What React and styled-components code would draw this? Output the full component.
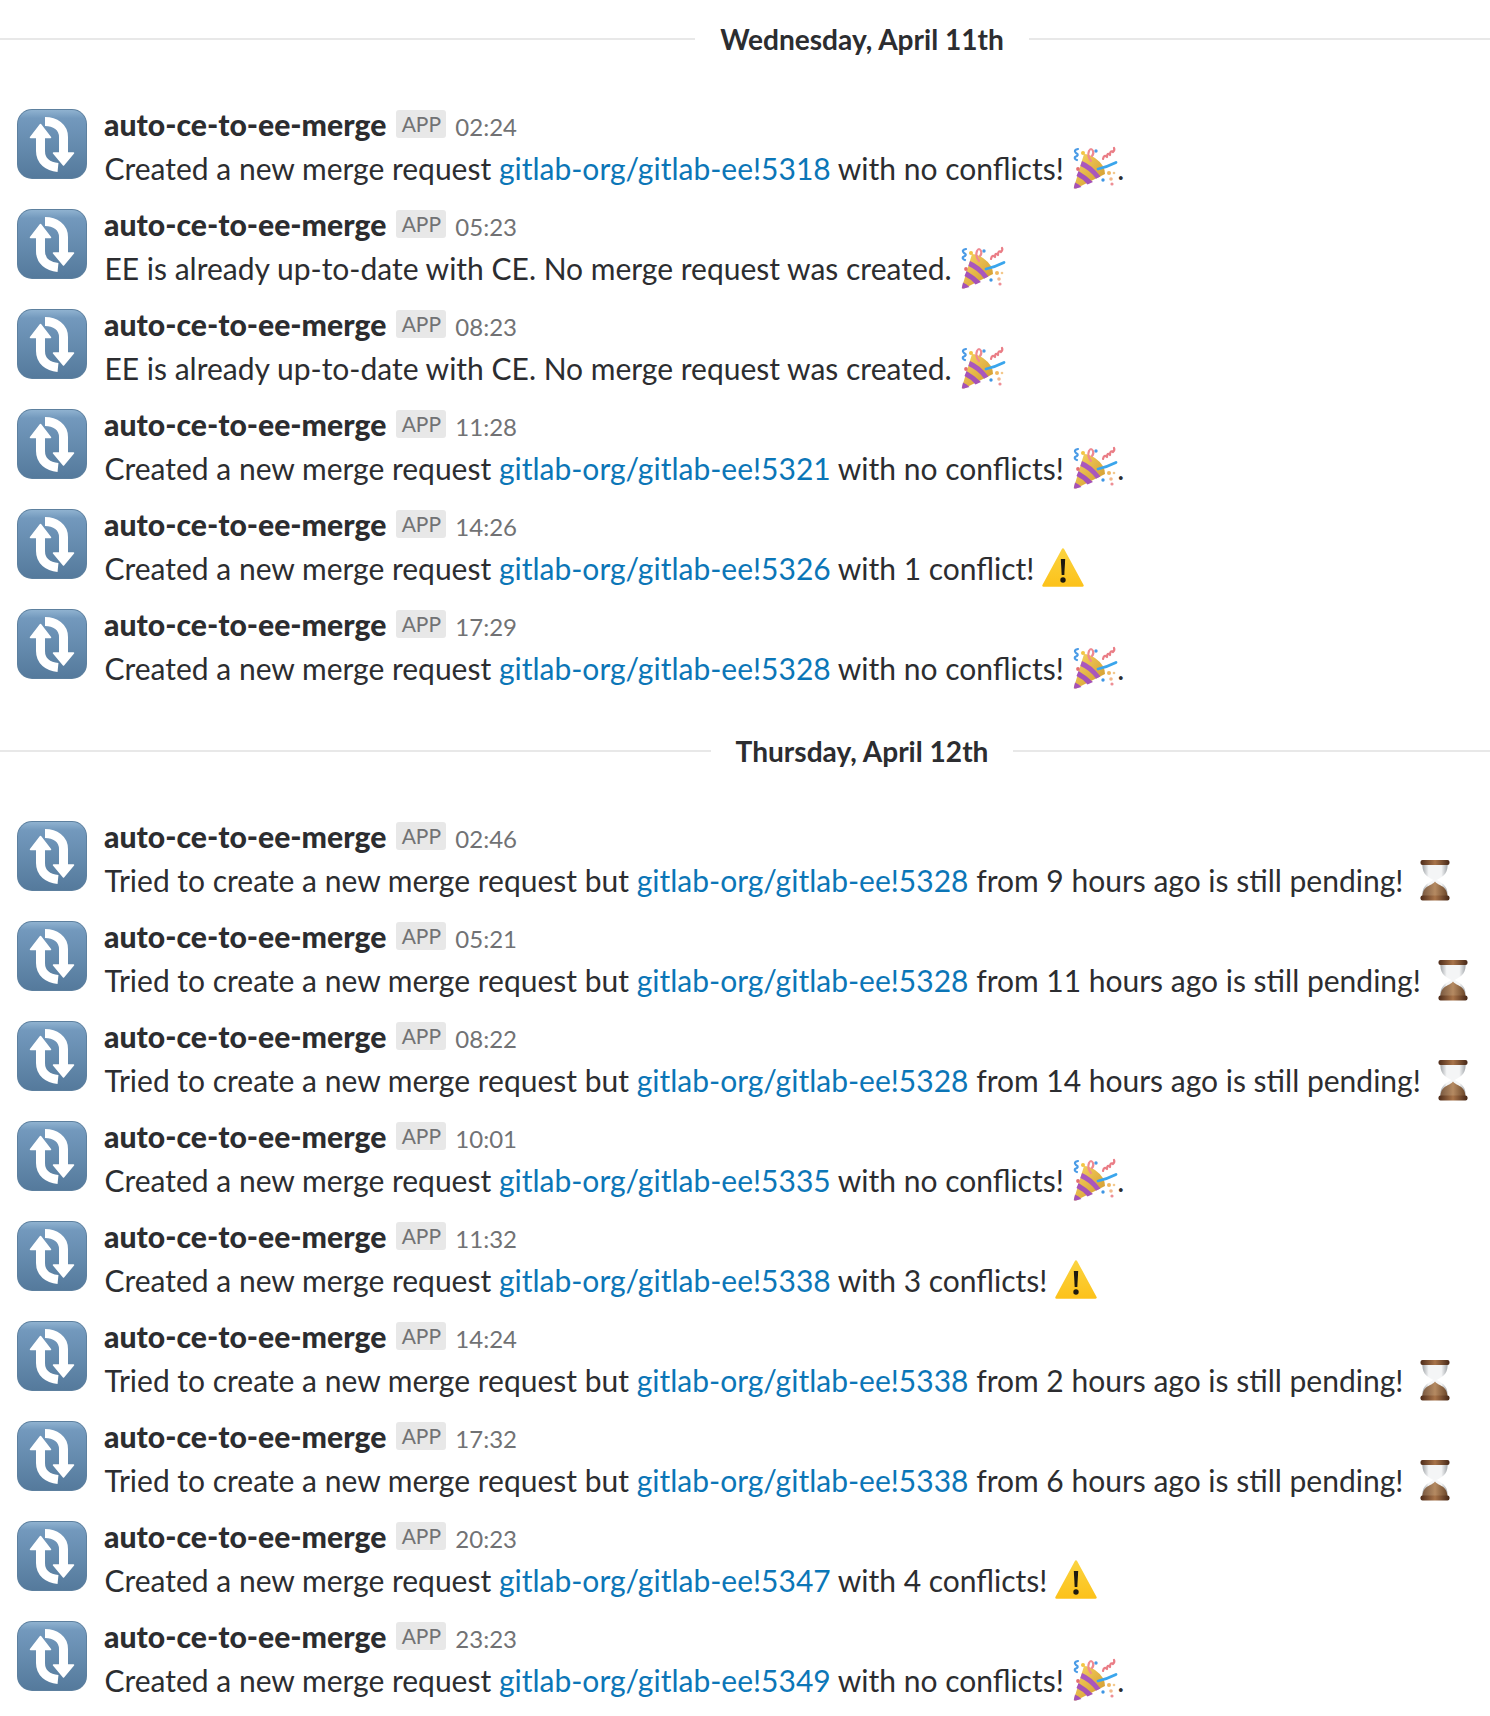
import React from "react";
import styled, { createGlobalStyle } from "styled-components";

const Global = createGlobalStyle`
  html, body { margin: 0; padding: 0; background: #fff; }
  body { font-family: Lato, "Open Sans", sans-serif; color: #2c2d30; }
`;

const Page = styled.div`
  width: 1490px;
  height: 1716px;
  overflow: hidden;
`;

const DayHeader = styled.div`
  display: flex;
  align-items: center;
  height: 78px;
  margin-top: ${(p) => (p.$first ? "0" : "43px")};
  margin-bottom: -9px;
`;

const DayLine = styled.div`
  height: 2px;
  background: #e8e8e8;
  flex: 1 1 ${(p) => (p.$left ? "234px" : "0")};
`;

const DayLabel = styled.div`
  font-size: 28.1px;
  font-weight: 700;
  line-height: 40px;
  padding: 0 25px;
  color: #2c2d30;
  white-space: nowrap;
`;

const Row = styled.div`
  display: flex;
  height: 100px;
  padding: 40px 0 0 17px;
  box-sizing: border-box;
`;

const Avatar = styled.svg`
  width: 70px;
  height: 70px;
  flex: none;
  display: block;
`;

const Body = styled.div`
  margin-left: 17px;
  margin-top: -9px;
  min-width: 0;
`;

const Head = styled.div`
  display: flex;
  align-items: baseline;
  height: 44px;
  padding-top: 2px;
  box-sizing: border-box;
`;

const Name = styled.span`
  font-size: 30.15px;
  font-weight: 900;
  line-height: 44px;
  color: #2c2d30;
`;

const Badge = styled.span`
  margin-left: 10px;
  width: 50px;
  height: 28px;
  display: inline-flex;
  align-items: center;
  justify-content: center;
  background: #e8e8e8;
  border-radius: 3px;
  font-size: 21px;
  color: #717274;
  line-height: 28px;
  align-self: flex-start;
  margin-top: 8px;
`;

const Time = styled.span`
  margin-left: 9px;
  font-size: 24px;
  color: #717274;
`;

const Text = styled.div`
  font-size: 30px;
  line-height: 44px;
  padding: 2px 0 0 0.5px;
  white-space: nowrap;
  color: #2c2d30;
`;

const Link = styled.a`
  color: #0b76b7;
  text-decoration: none;
`;

const Emoji = styled.svg`
  width: ${(p) => p.$w ?? 44}px;
  height: 44px;
  vertical-align: baseline;
  overflow: visible;
  margin: -10px ${(p) => p.$mr ?? 0}px -10px ${(p) => p.$ml ?? 4}px;
`;

const AvatarIcon = ({ id }) => (
  <Avatar viewBox="0 0 70 70">
    <defs>
      <linearGradient id={id} x1="0" y1="0" x2="0" y2="1">
        <stop offset="0" stopColor="#8fb2d0" />
        <stop offset="0.12" stopColor="#7399bd" />
        <stop offset="1" stopColor="#557a9c" />
      </linearGradient>
    </defs>
    <rect width="70" height="70" rx="15" fill="#5d809f" />
    <rect x="1" y="1" width="68" height="68" rx="14" fill={`url(#${id})`} />
    <g fill="none" stroke="#fff" strokeWidth="9">
      <path d="M23.5 26 V42 C23.5 52 31 57.5 41 58.5" />
      <path d="M46.5 46 V28 C46.5 18 38 12.500 28 12.500" />
    </g>
    <path d="M23.500 15.500 L13.500 28.500 H33.500 Z" fill="#fff" stroke="#fff" strokeWidth="1.500" strokeLinejoin="round" />
    <path d="M46.500 56 L36.500 44 H56.500 Z" fill="#fff" stroke="#fff" strokeWidth="1.500" strokeLinejoin="round" />
  </Avatar>
);

const Popper = ({ id }) => (
  <Emoji viewBox="0 0 48 44" $w={48} $ml={5} $mr={0.5}>
    <defs>
      <linearGradient id={id} x1="0" y1="0" x2="1" y2="1">
        <stop offset="0" stopColor="#f8d765" />
        <stop offset="1" stopColor="#cf9428" />
      </linearGradient>
    </defs>
    <path d="M5 41 Q4 43 7 42.500 L36 28 Q36 19 26 12 Q20 8 15 8 Z" fill={`url(#${id})`} />
    <path d="M9.500 25 Q18 30 24 36 L18.500 38.500 Q14 33 7.500 30 Z" fill="#a452b8" />
    <path d="M13 15 Q23 19 31.500 30.500 L27 32.800 Q21 24 11.300 20 Z" fill="#a957bd" />
    <path d="M6 36.500 Q10 38 12.500 41 L7 42.500 Q4 43 5 41 Z" fill="#a452b8" />
    <g fill="none" strokeWidth="2.200" strokeLinecap="round" strokeLinejoin="round">
      <path d="M9 3 Q4 4 7 7 Q11 9 6 11 Q5 13 8 14" stroke="#4a9be6" />
      <path d="M22 15 Q18 10 20 5 Q22 1 24 5 Q25 8 23 10" stroke="#ef8a92" />
      <path d="M34 13 Q35 8 38 11 Q38 6 41 9 Q41 4 44 6 Q46 4 45 2" stroke="#ea7d86" />
      <path d="M29 23 Q38 21 47 16.500" stroke="#3aa5ec" strokeWidth="2.800" />
    </g>
    <circle cx="14" cy="7" r="2" fill="#f3c544" />
    <circle cx="27" cy="5" r="1.700" fill="#4a9be6" />
    <circle cx="9" cy="23" r="1.900" fill="#e56f6f" />
    <circle cx="34" cy="34" r="1.700" fill="#3f96e4" />
    <circle cx="40" cy="27" r="2" fill="#f1b860" />
    <circle cx="45" cy="27" r="1.300" fill="#f3c88c" />
    <circle cx="42" cy="33" r="1.800" fill="#f2b98c" />
    <circle cx="43" cy="38" r="1.600" fill="#ee8f96" />
  </Emoji>
);

const Warning = ({ id }) => (
  <Emoji viewBox="0 0 44 44" $ml={7}>
    <defs>
      <linearGradient id={id} x1="0" y1="0" x2="0" y2="1">
        <stop offset="0" stopColor="#fbd33f" />
        <stop offset="1" stopColor="#fcc21b" />
      </linearGradient>
    </defs>
    <path d="M22 3.500 L41.500 39.500 H2.500 Z" fill={`url(#${id})`} stroke={`url(#${id})`} strokeWidth="2.500" strokeLinejoin="round" />
    <path d="M19.800 13 H24.200 L23.300 29 H20.700 Z" fill="#1d1a10" />
    <circle cx="22" cy="34" r="2.700" fill="#1d1a10" />
  </Emoji>
);

const Hourglass = ({ id }) => (
  <Emoji viewBox="0 0 44 44" $ml={10}>
    <defs>
      <linearGradient id={`${id}b`} x1="0" y1="0" x2="1" y2="0">
        <stop offset="0" stopColor="#4e2c1a" />
        <stop offset="0.5" stopColor="#a8744a" />
        <stop offset="1" stopColor="#452616" />
      </linearGradient>
      <linearGradient id={`${id}s`} x1="0" y1="0" x2="1" y2="0">
        <stop offset="0" stopColor="#7a5a42" />
        <stop offset="0.5" stopColor="#b58a62" />
        <stop offset="1" stopColor="#6a4528" />
      </linearGradient>
      <linearGradient id={`${id}g`} x1="0" y1="0" x2="1" y2="0">
        <stop offset="0" stopColor="#a3a7ab" />
        <stop offset="0.25" stopColor="#f4f5f6" />
        <stop offset="0.75" stopColor="#f4f5f6" />
        <stop offset="1" stopColor="#a3a7ab" />
      </linearGradient>
    </defs>
    <path d="M9.500 4 C8.500 15 13 18 20.300 22 C13 26 8.500 29 9.500 40 H34.500 C35.500 29 31 26 23.700 22 C31 18 35.500 15 34.500 4 Z" fill={`url(#${id}g)`} />
    <path d="M22 23.500 C19 28 9 27 9.500 40 H34.500 C35 27 25 28 22 23.500 Z" fill={`url(#${id}s)`} />
    <rect x="7.500" y="2" width="29" height="5" rx="2" fill={`url(#${id}b)`} />
    <rect x="7.500" y="37.500" width="29" height="5" rx="2" fill={`url(#${id}b)`} />
  </Emoji>
);

const EMOJI = { p: Popper, w: Warning, h: Hourglass };

const created = (link, tail, e, suffix) => ({ pre: "Created a new merge request ", link, tail, e, suffix });
const tried = (link, tail) => ({ pre: "Tried to create a new merge request but ", link, tail, e: "h" });
const uptodate = () => ({ pre: "EE is already up-to-date with CE. No merge request was created.", e: "p" });

const days = [
  {
    label: "Wednesday, April 11th",
    rows: [
      ["02:24", created("gitlab-org/gitlab-ee!5318", " with no conflicts!", "p", ".")],
      ["05:23", uptodate()],
      ["08:23", uptodate()],
      ["11:28", created("gitlab-org/gitlab-ee!5321", " with no conflicts!", "p", ".")],
      ["14:26", created("gitlab-org/gitlab-ee!5326", " with 1 conflict!", "w")],
      ["17:29", created("gitlab-org/gitlab-ee!5328", " with no conflicts!", "p", ".")],
    ],
  },
  {
    label: "Thursday, April 12th",
    rows: [
      ["02:46", tried("gitlab-org/gitlab-ee!5328", " from 9 hours ago is still pending!")],
      ["05:21", tried("gitlab-org/gitlab-ee!5328", " from 11 hours ago is still pending!")],
      ["08:22", tried("gitlab-org/gitlab-ee!5328", " from 14 hours ago is still pending!")],
      ["10:01", created("gitlab-org/gitlab-ee!5335", " with no conflicts!", "p", ".")],
      ["11:32", created("gitlab-org/gitlab-ee!5338", " with 3 conflicts!", "w")],
      ["14:24", tried("gitlab-org/gitlab-ee!5338", " from 2 hours ago is still pending!")],
      ["17:32", tried("gitlab-org/gitlab-ee!5338", " from 6 hours ago is still pending!")],
      ["20:23", created("gitlab-org/gitlab-ee!5347", " with 4 conflicts!", "w")],
      ["23:23", created("gitlab-org/gitlab-ee!5349", " with no conflicts!", "p", ".")],
    ],
  },
];

const Message = ({ id, time, m }) => {
  const E = EMOJI[m.e];
  return (
    <Row>
      <AvatarIcon id={`a${id}`} />
      <Body>
        <Head>
          <Name>auto-ce-to-ee-merge</Name>
          <Badge>APP</Badge>
          <Time>{time}</Time>
        </Head>
        <Text>
          {m.pre}
          {m.link && <Link>{m.link}</Link>}
          {m.tail}
          <E id={`e${id}`} />
          {m.suffix}
        </Text>
      </Body>
    </Row>
  );
};

export default function App() {
  return (
    <Page>
      <Global />
      {days.map((d, i) => (
        <section key={d.label}>
          <DayHeader $first={i === 0}>
            <DayLine $left />
            <DayLabel>{d.label}</DayLabel>
            <DayLine />
          </DayHeader>
          {d.rows.map(([time, m], j) => (
            <Message key={time} id={`${i}-${j}`} time={time} m={m} />
          ))}
        </section>
      ))}
    </Page>
  );
}
